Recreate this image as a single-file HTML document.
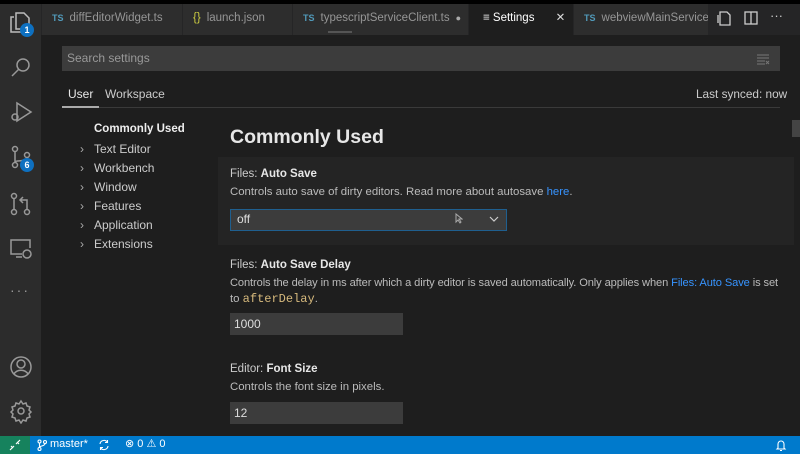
<!DOCTYPE html>
<html><head><style>
*{box-sizing:border-box;margin:0;padding:0}
body{width:800px;height:454px;overflow:hidden;background:#1e1e1e;font-family:"Liberation Sans",sans-serif;color:#ccc;position:relative;font-size:12px}
.a{position:absolute;white-space:nowrap}
.tab{position:absolute;top:4px;height:31px;background:#2d2d2d;font-size:11.5px;color:#969696;line-height:28px;padding-left:10px;white-space:nowrap;overflow:hidden}
.ts{color:#519aba;font-size:9px;font-weight:bold;margin-right:6px}
.nav{position:absolute;left:80px;font-size:12px;color:#ccc}
.nav span{display:inline-block;width:14px;color:#aaa}
.title{font-size:11.5px;color:#ccc}
.title b{color:#e7e7e7}
.desc{font-size:11.4px;color:#bbb}
.lnk{color:#3794ff}
.inp{position:absolute;background:#3c3c3c;height:22px;font-size:12px;color:#ddd;line-height:22px;padding-left:4px}
svg{position:absolute}
</style></head><body>
<div class="a" style="left:0;top:0;width:800px;height:4px;background:#000"></div>
<div class="a" style="left:0;top:4px;width:41px;height:432px;background:#2c2c2c"></div>
<svg style="left:8px;top:10px" width="26" height="26" viewBox="0 0 26 26" fill="none" stroke="#bbb" stroke-width="1.5"><path d="M6 7H3v15h12v-3M8 3h8l5 5v11H8z"/></svg>
<div class="a" style="left:20px;top:23px;width:14px;height:14px;border-radius:7px;background:#0e70c0;color:#fff;font-size:9px;text-align:center;line-height:14px;font-weight:bold">1</div>
<svg style="left:8px;top:55px" width="26" height="26" viewBox="0 0 26 26" fill="none" stroke="#999" stroke-width="1.5"><circle cx="15" cy="10" r="6"/><path d="M11 14l-7 7"/></svg>
<svg style="left:8px;top:99px" width="26" height="26" viewBox="0 0 26 26" fill="none" stroke="#999" stroke-width="1.5"><path d="M9 4l14 9-14 9z"/><circle cx="7" cy="18" r="3"/></svg>
<svg style="left:8px;top:144px" width="26" height="26" viewBox="0 0 26 26" fill="none" stroke="#999" stroke-width="1.5"><circle cx="7" cy="5" r="2.5"/><circle cx="7" cy="21" r="2.5"/><circle cx="19" cy="11" r="2.5"/><path d="M7 8v10M19 14c0 4-12 2-12 4"/></svg>
<div class="a" style="left:20px;top:158px;width:14px;height:14px;border-radius:7px;background:#0e70c0;color:#fff;font-size:9px;text-align:center;line-height:14px;font-weight:bold">6</div>
<svg style="left:8px;top:191px" width="26" height="26" viewBox="0 0 26 26" fill="none" stroke="#999" stroke-width="1.5"><circle cx="6" cy="5" r="2.5"/><circle cx="6" cy="21" r="2.5"/><circle cx="19" cy="21" r="2.5"/><path d="M6 8v10M19 18V9h-6M15 6l-3 3 3 3"/></svg>
<svg style="left:8px;top:235px" width="26" height="26" viewBox="0 0 26 26" fill="none" stroke="#999" stroke-width="1.5"><path d="M14 19H3V5h19v8M8 22h6"/><circle cx="19" cy="19" r="4"/></svg>
<div class="a" style="left:10px;top:282px;color:#999;font-size:14px;letter-spacing:2px">···</div>
<svg style="left:8px;top:354px" width="26" height="26" viewBox="0 0 26 26" fill="none" stroke="#999" stroke-width="1.5"><circle cx="13" cy="13" r="10"/><circle cx="13" cy="10" r="4"/><path d="M6 20c3-5 11-5 14 0"/></svg>
<svg style="left:8px;top:398px" width="26" height="26" viewBox="0 0 26 26" fill="none" stroke="#999" stroke-width="1.5"><circle cx="13" cy="13" r="3"/><path d="M13 3l2 3 3-1 1 3 3 1-1 3 2 2-2 2 1 3-3 1-1 3-3-1-2 3-2-3-3 1-1-3-3-1 1-3-2-2 2-2-1-3 3-1 1-3 3 1z"/></svg>
<div class="a" style="left:41px;top:4px;width:759px;height:31px;background:#252526"></div>
<div class="tab" style="left:42px;width:140px"><span class="ts">TS</span>diffEditorWidget.ts</div>
<div class="tab" style="left:183px;width:109px"><span style="color:#cbcb41;margin-right:6px">{}</span>launch.json</div>
<div class="tab" style="left:293px;width:175px"><span class="ts">TS</span>typescriptServiceClient.ts<span style="color:#aaa;margin-left:6px;font-size:9px">●</span></div>
<div class="tab" style="left:469px;width:104px;background:#1e1e1e;color:#fff;padding-left:14px">≡ Settings <span style="margin-left:18px;color:#ddd">✕</span></div>
<div class="tab" style="left:574px;width:134px"><span class="ts">TS</span>webviewMainService.ts</div>
<div class="a" style="left:328px;top:31px;width:24px;height:2px;background:#555"></div>
<svg style="left:715px;top:9px" width="18" height="18" viewBox="0 0 18 18" fill="none" stroke="#ccc" stroke-width="1.3"><path d="M5 3h7l3 3v10H5zM3 6v8"/></svg>
<svg style="left:742px;top:9px" width="18" height="18" viewBox="0 0 18 18" fill="none" stroke="#ccc" stroke-width="1.3"><rect x="3" y="3" width="12" height="12"/><path d="M9 3v12"/></svg>
<div class="a" style="left:770px;top:8px;color:#ccc;font-size:13px">···</div>
<div class="a" style="left:62px;top:46px;width:718px;height:25px;background:#3c3c3c;color:#999;font-size:12px;line-height:25px;padding-left:5px">Search settings</div>
<svg style="left:756px;top:53px" width="14" height="12" viewBox="0 0 14 12" stroke="#777" stroke-width="1"><path d="M1 2h12M1 5h12M1 8h8M1 11h8M10 8l3 3M13 8l-3 3"/></svg>
<div class="a" style="left:68px;top:87px;color:#e7e7e7;font-size:12px">User</div>
<div class="a" style="left:105px;top:87px;color:#ccc;font-size:12px">Workspace</div>
<div class="a" style="left:696px;top:87px;color:#ccc;font-size:11.8px">Last synced: now</div>
<div class="a" style="left:62px;top:107px;width:718px;height:1px;background:#3a3a3a"></div>
<div class="a" style="left:62px;top:106px;width:37px;height:2px;background:#aaa"></div>
<div class="nav" style="left:94px;top:123px;font-weight:bold;color:#eee;font-size:11.5px">Commonly Used</div>
<div class="nav" style="top:142px"><span>›</span>Text Editor</div>
<div class="nav" style="top:161px"><span>›</span>Workbench</div>
<div class="nav" style="top:180px"><span>›</span>Window</div>
<div class="nav" style="top:199px"><span>›</span>Features</div>
<div class="nav" style="top:218px"><span>›</span>Application</div>
<div class="nav" style="top:237px"><span>›</span>Extensions</div>
<div class="a" style="left:230px;top:126px;font-size:19.5px;font-weight:bold;color:#e7e7e7">Commonly Used</div>
<div class="a" style="left:792px;top:120px;width:8px;height:17px;background:#444"></div>
<div class="a" style="left:218px;top:157px;width:576px;height:88px;background:#242424"></div>
<div class="a title" style="left:230px;top:168px">Files: <b>Auto Save</b></div>
<div class="a desc" style="left:230px;top:186px">Controls auto save of dirty editors. Read more about autosave <span class="lnk">here</span>.</div>
<div class="inp" style="left:230px;top:209px;width:277px;height:22px;border:1px solid #1f5f8f;padding-left:6px;line-height:19px">off</div>
<svg style="left:455px;top:213px" width="8" height="11" viewBox="0 0 8 11" fill="none" stroke="#aaa" stroke-width="1"><path d="M1 1v8l2-2 2 3 1-1-2-3h3z"/></svg>
<svg style="left:489px;top:215px" width="10" height="8" viewBox="0 0 10 8" fill="none" stroke="#ccc" stroke-width="1.2"><path d="M1 2l4 4 4-4"/></svg>
<div class="a title" style="left:230px;top:259px">Files: <b>Auto Save Delay</b></div>
<div class="a desc" style="left:230px;top:277px;font-size:11.1px;letter-spacing:-0.1px">Controls the delay in ms after which a dirty editor is saved automatically. Only applies when <span class="lnk">Files: Auto Save</span> is set</div>
<div class="a desc" style="left:230px;top:292px">to <span style="font-family:'Liberation Mono',monospace;color:#d7ba7d;font-size:12px">afterDelay</span>.</div>
<div class="inp" style="left:230px;top:313px;width:173px">1000</div>
<div class="a title" style="left:230px;top:363px">Editor: <b>Font Size</b></div>
<div class="a desc" style="left:230px;top:381px">Controls the font size in pixels.</div>
<div class="inp" style="left:230px;top:402px;width:173px">12</div>
<div class="a" style="left:0;top:436px;width:800px;height:18px;background:#007acc"></div>
<div class="a" style="left:0;top:436px;width:30px;height:18px;background:#16825d"></div>
<svg style="left:9px;top:439px" width="12" height="12" viewBox="0 0 12 12" fill="none" stroke="#fff" stroke-width="1.2"><path d="M1 11l4-4M4 9L2 7M11 1L7 5M8 3l2 2"/></svg>
<svg style="left:37px;top:439px" width="10" height="12" viewBox="0 0 10 12" fill="none" stroke="#fff" stroke-width="1.1"><circle cx="2.5" cy="2.5" r="1.5"/><circle cx="2.5" cy="10" r="1.5"/><circle cx="8" cy="3" r="1.5"/><path d="M2.5 4v4.5M8 4.5c0 3-5.5 2-5.5 4"/></svg>
<div class="a" style="left:50px;top:438px;color:#fff;font-size:11px">master*</div>
<svg style="left:98px;top:439px" width="12" height="12" viewBox="0 0 12 12" fill="none" stroke="#fff" stroke-width="1.1"><path d="M2 5a4 4 0 0 1 7.5-1.5M10 7a4 4 0 0 1-7.5 1.5M9.5 1v2.5H7M2.5 11V8.5H5"/></svg>
<div class="a" style="left:125px;top:437px;color:#fff;font-size:11px">⊗ 0 ⚠ 0</div>
<svg style="left:775px;top:438px" width="12" height="14" viewBox="0 0 12 14" fill="none" stroke="#fff" stroke-width="1.1"><path d="M3 10V6a3 3 0 0 1 6 0v4l1 1H2zM5 12.5h2"/></svg>
</body></html>
